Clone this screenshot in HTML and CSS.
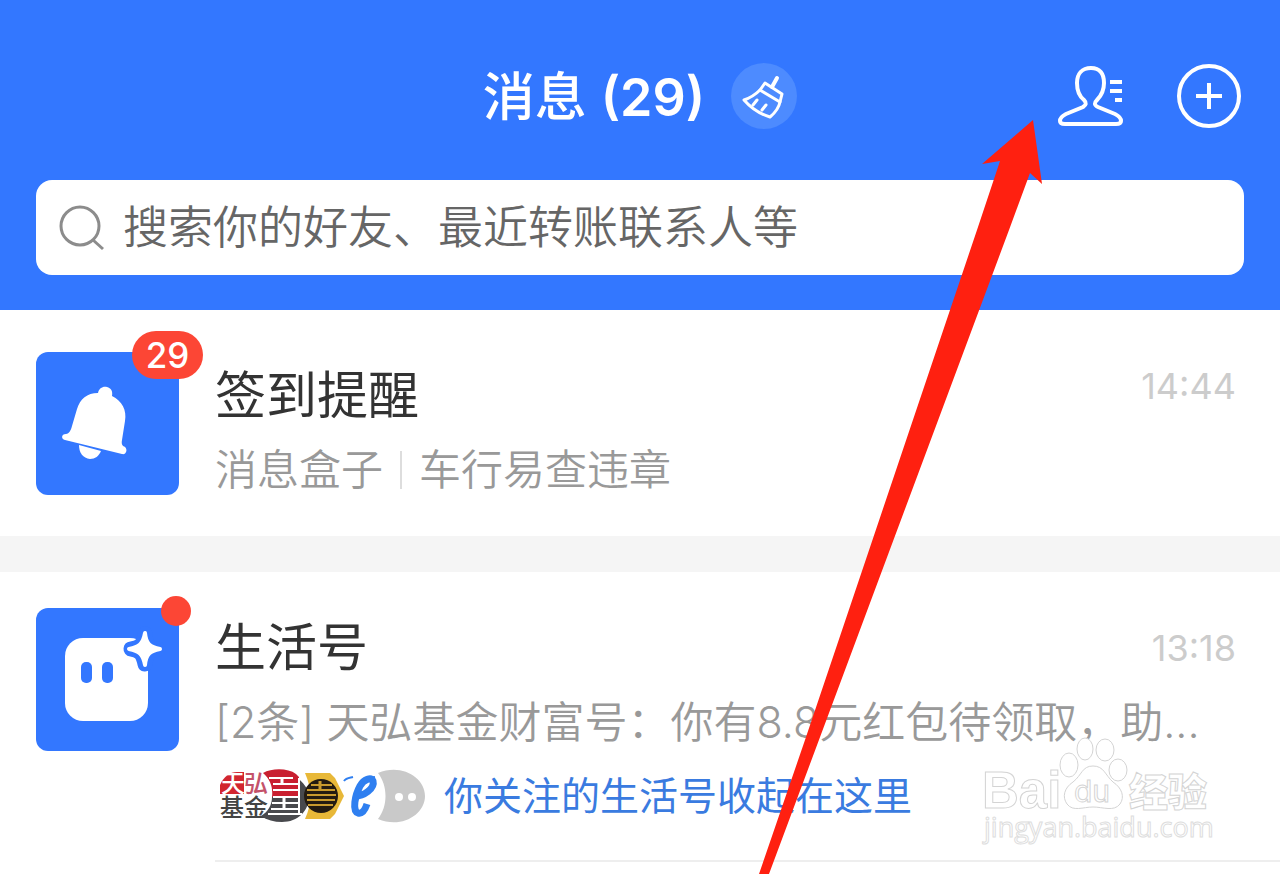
FILE: index.html
```html
<!DOCTYPE html>
<html lang="zh-CN">
  <head>
    <meta charset="UTF-8" />
    <meta name="viewport" content="width=device-width, initial-scale=1.0" />
    <title>消息</title>
    <link rel="stylesheet" href="styles.css">
  </head>
  <body>
    <header class="header">
      <div class="topbar">
        <div class="heading">
          <h1 class="title">消息 <span class="total">(29)</span></h1>
          <button class="clean" aria-label="清理">
            <svg width="66" height="66" viewBox="0 0 66 66" fill="none" stroke="#fff" stroke-width="3" stroke-linejoin="round" stroke-linecap="round">
              <path d="M46 15L41 24" stroke-width="4" />
              <path d="M34 20L51 31L49 39L29 27Z" />
              <path d="M29 27C25 31 19 35 13 37C20 45 29 51 39 54C45 49 48 44 49 39" />
              <path d="M26 37L22 42M35 42L31 47" />
            </svg>
          </button>
        </div>
        <div class="actions">
          <button class="contacts" aria-label="通讯录">
            <svg width="66" height="62" viewBox="0 0 66 62" fill="none" stroke="#fff" stroke-width="4">
              <path d="M33 3C24 3 19 9 19 18C19 26 21 31 26 35C29 38 28 40 25 42L8 49C4 51 2 53 2 56C2 58 4 59 7 59H58C61 59 63 58 63 56C63 53 61 51 57 49L40 42C36 40 36 38 39 35C43 31 46 26 46 18C46 9 42 3 33 3Z" />
              <path d="M52 17H64M52 26H64M57 35H64" />
            </svg>
          </button>
          <button class="add" aria-label="添加">
            <svg width="66" height="66" viewBox="0 0 66 66" fill="none" stroke="#fff">
              <circle cx="33" cy="33" r="30" stroke-width="4" />
              <path d="M20 33H46M33 20V46" stroke-width="4" />
            </svg>
          </button>
        </div>
      </div>
      <label class="search">
        <svg width="46" height="46" viewBox="0 0 46 46" fill="none" stroke="#8c8c8c" stroke-width="3">
          <circle cx="21" cy="21" r="19" />
          <path d="M34 35L44 44" />
        </svg>
        <input class="search-input" type="search" aria-label="搜索" placeholder="搜索你的好友、最近转账联系人等" />
      </label>
    </header>

    <main>
      <section class="message notice">
        <div class="avatar">
          <svg width="143" height="143" viewBox="0 0 143 143" fill="#fff">
            <path d="M62 41C63 36 67 34 71 35C75 36 77 39 76 44C86 49 91 58 89 69L86 88C85 93 87 94 89 95C92 98 90 103 86 102L29 88C25 87 25 82 30 82C33 82 35 78 36 74L41 57C44 47 51 41 62 41Z" />
            <path d="M43 93L65 99C63 104 59 107 54 107C47 106 43 101 43 93Z" />
          </svg>
          <span class="badge">29</span>
        </div>
        <div class="content">
          <div class="row">
            <h2 class="name">签到提醒</h2>
            <time class="time">14:44</time>
          </div>
          <p class="summary source">消息盒子<span class="bar"></span>车行易查违章</p>
        </div>
      </section>

      <section class="message">
        <div class="avatar">
          <svg width="143" height="143" viewBox="0 0 143 143">
            <rect x="29" y="30" width="83" height="83" rx="18" fill="#fff" />
            <rect x="45" y="54" width="11" height="21" rx="5" fill="#3377ff" />
            <rect x="66" y="54" width="11" height="21" rx="5" fill="#3377ff" />
            <path d="M109 26C110 37 113 40 122 41C113 42 110 46 109 56C107 46 104 42 95 41C104 40 107 37 109 26Z" fill="#3377ff" stroke="#3377ff" stroke-width="15" stroke-linejoin="round" />
            <path d="M109 25C110 36 114 39 124 41C114 43 110 46 109 57C107 46 103 43 93 41C103 39 107 36 109 25Z" fill="#fff" stroke="#fff" stroke-width="4" stroke-linejoin="round" />
          </svg>
          <span class="dot"></span>
        </div>
        <div class="content divided">
          <div class="row">
            <h2 class="name">生活号</h2>
            <time class="time">13:18</time>
          </div>
          <p class="summary">[2条] 天弘基金财富号：你有8.8元红包待领取，助...</p>
          <div class="follow">
            <svg width="210" height="54" viewBox="0 0 210 54">
              <!-- 天弘基金 -->
              <path d="M5 25V16C9 7 15 3 22 3H29V25Z" fill="#d22630" />
              <text x="6" y="23" class="fund white">天</text>
              <text x="29" y="23" class="fund red">弘</text>
              <text x="5" y="47" class="fund">基金</text>
              <!-- red and grey stripes -->
              <path d="M48 4C57 -1 73 -1 81 5L84 8V28H57C58 19 56 11 48 4Z" fill="#c91f30" />
              <path d="M57 28H84V10C90 16 94 21 94 27C94 42 83 53 67 53C59 53 52 51 46 47C53 43 57 36 57 28Z" fill="#48494d" />
              <path d="M54 9H78M58 15H84M58 21H84M58 28H84M57 34H84M56 40H84M53 45H87" stroke="#fff" stroke-width="2" />
              <path d="M67 9V15M69 28V40" stroke="#fff" stroke-width="3" />
              <path d="M84 9V46" stroke="#fff" stroke-width="2" />
              <!-- hexagon -->
              <path d="M90 4H115L120 9L129 27L120 45L115 50H90C97 35 97 20 90 4Z" fill="#e8b838" />
              <circle cx="106" cy="27" r="17" fill="#241b11" />
              <path d="M96 16H117M92 21H120M92 26H121M92 31H120M93 36H118" stroke="#c99a2e" stroke-width="2" />
              <path d="M105 12V21" stroke="#c99a2e" stroke-width="3" />
              <!-- blue e -->
              <path d="M129 12C131 9 134 9 138 8M154 9L160 8" fill="none" stroke="#2f7ff0" stroke-width="2" />
              <path d="M138 27C149 28 160 19 158 12C156 8 149 10 145 17C140 26 137 42 143 44C147 45 150 41 152 35" fill="none" stroke="#2f7ff0" stroke-width="7" />
              <!-- more -->
              <path d="M163 4C186 -6 210 8 210 27C210 46 186 60 163 50C173 37 173 17 163 4Z" fill="#c9c9c9" />
              <circle cx="184" cy="28" r="4" fill="#fff" />
              <circle cx="197" cy="28" r="4" fill="#fff" />
            </svg>
            <a class="follow-link" href="#">你关注的生活号收起在这里</a>
          </div>
        </div>
      </section>
    </main>

    <svg class="watermark" width="236" height="114" viewBox="0 0 236 114">
      <g fill="#fff" stroke="#d4d4d4">
        <text x="2" y="76" class="wm-logo">Bai</text>
        <ellipse cx="89" cy="33" rx="9" ry="12" />
        <ellipse cx="105" cy="17" rx="8" ry="11" />
        <ellipse cx="125" cy="18" rx="9" ry="11" />
        <ellipse cx="138" cy="38" rx="9" ry="11" />
        <path d="M113 34C102 34 102 43 93 50C84 56 82 65 87 72C93 80 103 75 113 75C123 75 134 80 140 72C145 65 142 56 133 50C125 43 124 34 113 34Z" />
        <text x="94" y="70" class="wm-du">du</text>
        <text x="149" y="74" class="wm-cn">经验</text>
      </g>
      <text x="4" y="105" class="wm-url">jingyan.baidu.com</text>
    </svg>

    <svg class="arrow" width="300" height="754" viewBox="0 0 300 754">
      <path d="M283 0L292 64L280 53L259 110L19 754H9L55 620L227 110L250 41L232 44Z" fill="#ff2010" />
    </svg>
  </body>
</html>
```
FILE: styles.css
```css
* {
  box-sizing: border-box;
}
body {
  position: relative;
  min-height: 100vh;
  margin: 0;
  background-color: #fff;
  font-family: Inter, "Noto Sans CJK SC", sans-serif;
}
h1,
h2,
p {
  margin: 0;
}
button {
  padding: 0;
  border: 0;
  background: none;
  cursor: pointer;
}
svg {
  display: block;
  flex-shrink: 0;
}
.header {
  padding: 60px 36px 35px;
  background-color: #3377ff;
}
.topbar {
  display: grid;
  grid-template-columns: 1fr auto 1fr;
  align-items: center;
  height: 72px;
}
.heading {
  grid-column: 2;
  display: flex;
  align-items: center;
  gap: 26px;
}
.title {
  padding-top: 4px;
  color: #fff;
  font-size: 52px;
  font-weight: 500;
  line-height: 68px;
  white-space: nowrap;
}
.total {
  font-weight: 600;
}
.clean {
  border-radius: 50%;
  background-color: #4d8bff;
}
.actions {
  display: flex;
  justify-content: flex-end;
  align-items: center;
  gap: 52px;
  padding-right: 2px;
}
.search {
  display: flex;
  align-items: center;
  gap: 18px;
  height: 95px;
  margin-top: 48px;
  padding: 0 23px;
  border-radius: 16px;
  background-color: #fff;
}
.search-input {
  flex: 1;
  min-width: 0;
  padding: 0;
  border: 0;
  outline: 0;
  background: none;
  font-family: inherit;
  font-size: 45px;
  font-weight: 350;
}
.search-input::placeholder {
  color: #666;
}
.message {
  display: flex;
  gap: 36px;
  padding: 42px 0 0 36px;
}
.message + .message {
  padding-top: 36px;
  border-top: 36px solid #f5f5f5;
}
.avatar {
  position: relative;
  flex-shrink: 0;
  width: 143px;
  height: 143px;
  border-radius: 12px;
  background-color: #3377ff;
}
.badge {
  position: absolute;
  top: -21px;
  right: -24px;
  width: 71px;
  border-radius: 24px;
  background-color: #fc4635;
  color: #fff;
  font-size: 35px;
  font-weight: 500;
  line-height: 48px;
  text-align: center;
}
.dot {
  position: absolute;
  top: -12px;
  right: -12px;
  width: 30px;
  height: 30px;
  border-radius: 50%;
  background-color: #fc4635;
}
.content {
  flex: 1;
  min-width: 0;
}
.notice .content {
  height: 184px;
  padding-top: 4px;
}
.divided {
  padding-bottom: 31px;
  border-bottom: 2px solid #eee;
}
.row {
  display: flex;
  justify-content: space-between;
  align-items: center;
  height: 80px;
  padding-right: 44px;
}
.notice .row {
  align-items: flex-start;
}
.name {
  color: #333;
  font-size: 51px;
  font-weight: 400;
  line-height: 80px;
}
.time {
  color: #ccc;
  font-size: 36px;
  font-weight: 400;
  line-height: 60px;
}
.summary {
  color: #999;
  font-size: 43px;
  font-weight: 350;
  line-height: 68px;
  white-space: nowrap;
}
.source {
  display: flex;
  align-items: center;
  font-size: 42px;
}
.bar {
  width: 2px;
  height: 38px;
  margin: 0 17px;
  background-color: #ddd;
}
.follow {
  display: flex;
  align-items: center;
  gap: 19px;
  height: 66px;
  margin-top: 7px;
}
.follow-link {
  color: #3a7be0;
  font-size: 39px;
  line-height: 66px;
  text-decoration: none;
}
.fund {
  fill: #444;
  font-size: 24px;
  font-weight: 500;
}
.white {
  fill: #fff;
}
.red {
  fill: #c4526a;
}
.watermark {
  position: absolute;
  top: 732px;
  right: 64px;
}
.wm-logo {
  font-family: "Liberation Sans", sans-serif;
  font-size: 51px;
  font-weight: 700;
}
.wm-du {
  font-size: 30px;
}
.wm-cn {
  font-size: 39px;
  font-weight: 900;
}
.wm-url {
  fill: #fff;
  stroke: #ddd;
  font-family: "Open Sans", sans-serif;
  font-size: 27px;
}
.arrow {
  position: absolute;
  top: 120px;
  left: 750px;
}
```
